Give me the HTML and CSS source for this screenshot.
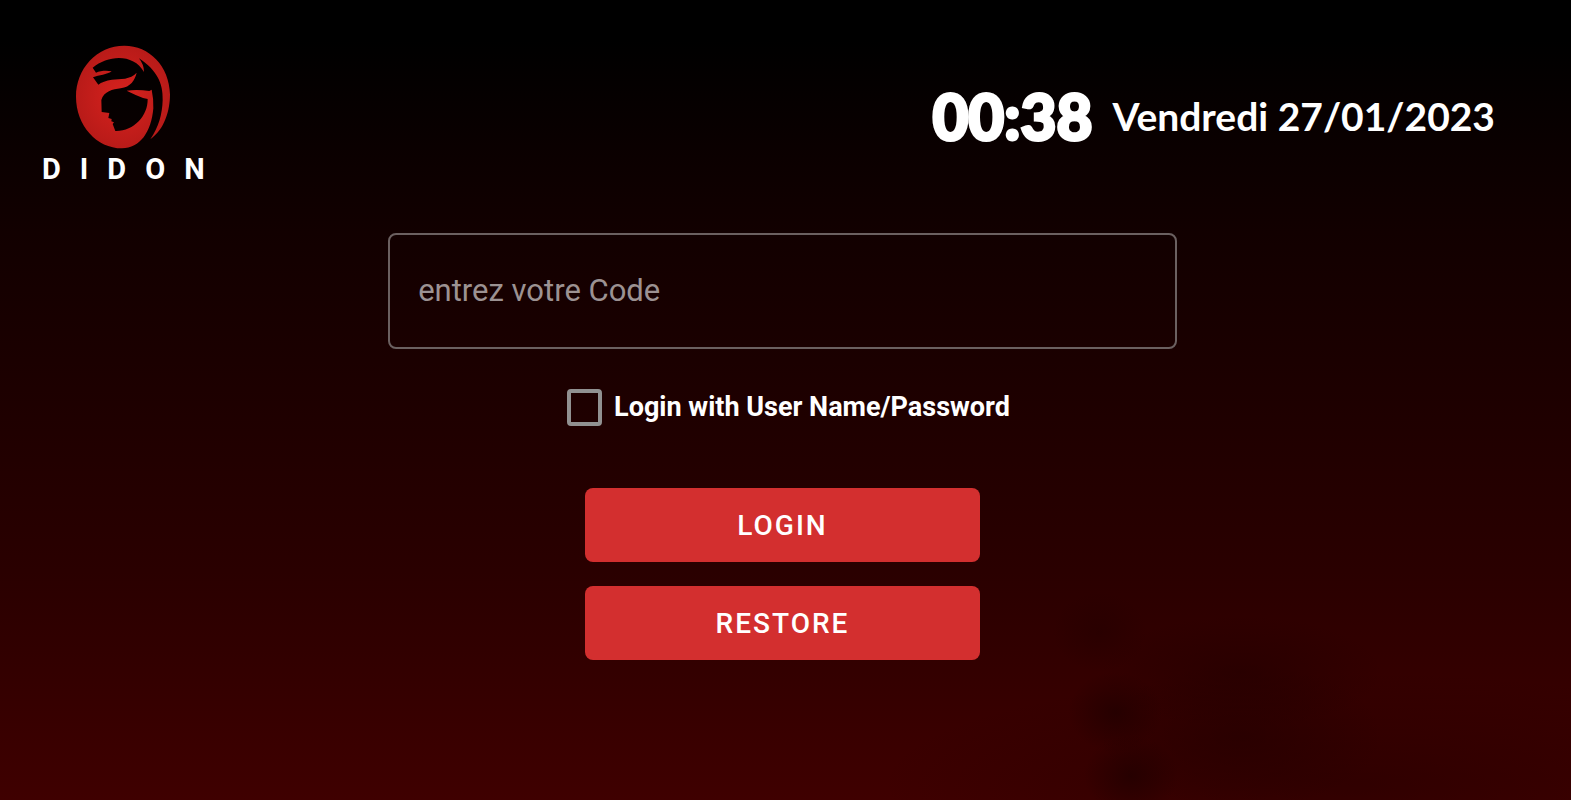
FILE: index.html
```html
<!DOCTYPE html>
<html lang="fr">
<head>
<meta charset="utf-8">
<meta name="viewport" content="width=device-width, initial-scale=1">
<title>Didon</title>
<link rel="stylesheet" href="styles.css">
</head>
<body>
<div class="screen">
  <header class="header">
    <div class="brand">
      <svg class="brand-mark" viewBox="18 15 286 312" aria-hidden="true">
        <defs>
          <radialGradient id="mark-fill" cx="0.5" cy="0.5" r="0.55">
            <stop offset="0" stop-color="#d8221e"/>
            <stop offset="1" stop-color="#b51a18"/>
          </radialGradient>
        </defs>
        <path fill="url(#mark-fill)" d="M243 298C286 268 302 212 302 163C300 78 240 17 165 17C82 17 20 86 20 170C20 256 82 325 158 325C212 325 246 276 252 205Q253 176 247 149L240 153Q205 148 172 152Q185 158 199 165Q218 174 235 177C236 228 192 275 138 273L130 252L134 247L126 244L127 237L117 234L120 219L97 216L96 180C104 154 130 148 154 145C184 140 196 122 202 98C184 119 152 117 128 119C110 121 96 127 87 134L71 112C90 104 112 105 127 94C112 91 94 92 80 98L70 83C118 43 194 41 224 96Q224 74 209 55C262 90 282 130 280 180C279 222 268 262 243 298Z"/>
      </svg>
      <div class="brand-name">DIDON</div>
    </div>
    <div class="clock">
      <time class="clock-time">00:38</time>
      <time class="clock-date" datetime="2023-01-27">Vendredi 27/01/2023</time>
    </div>
  </header>
  <main class="main">
    <form class="login">
      <input class="code" type="text" placeholder="entrez votre Code" aria-label="entrez votre Code">
      <label class="mode"><input class="mode-box" type="checkbox">Login with User Name/Password</label>
      <div class="actions">
        <button class="action" type="button">LOGIN</button>
        <button class="action" type="button">RESTORE</button>
      </div>
    </form>
  </main>
</div>
</body>
</html>
```

FILE: styles.css
```css
* {
  box-sizing: border-box;
}

body {
  margin: 0;
  background: #000;
  color: #fff;
  font-family: Roboto, "Liberation Sans", sans-serif;
}

.screen {
  min-height: 100vh;
  background:
    radial-gradient(ellipse 3% 5% at 70% 79%, rgba(28, 0, 0, 0.3), transparent),
    radial-gradient(ellipse 3% 5% at 71% 89%, rgba(28, 0, 0, 0.6), transparent),
    radial-gradient(ellipse 3% 5% at 72% 97%, rgba(28, 0, 0, 0.6), transparent),
    radial-gradient(ellipse 9% 7% at 79% 84%, rgba(28, 0, 0, 0.4), transparent),
    radial-gradient(ellipse 9% 9% at 79% 92%, rgba(28, 0, 0, 0.4), transparent),
    radial-gradient(ellipse 30% 14% at 86% 98%, rgba(28, 0, 0, 0.4), transparent),
    linear-gradient(#000 0, #000 5%, #120000 29%, #200000 54%, #2b0000 73%, #3f0000 100%);
}

.header {
  display: flex;
  justify-content: space-between;
  align-items: flex-start;
  padding: 45px 76px 0 42px;
}

.brand {
  display: flex;
  flex-direction: column;
  align-items: center;
}

.brand-mark {
  display: block;
  width: 96px;
  height: 104px;
}

.brand-name {
  margin-right: -20px;
  font-size: 29px;
  line-height: 40px;
  font-weight: 700;
  letter-spacing: 19px;
}

.clock {
  display: flex;
  align-items: center;
  gap: 20px;
  padding-top: 33px;
  font-family: Lato, "Open Sans", sans-serif;
}

.clock-time {
  font-size: 62px;
  line-height: 76px;
  font-weight: 900;
  -webkit-text-stroke: 3px #fff;
}

.clock-date {
  font-size: 39px;
  line-height: 76px;
  font-weight: 700;
}

.main {
  padding: 44px 6px 0 0;
}

.login {
  display: flex;
  flex-direction: column;
  align-items: center;
}

.code {
  width: 50.4%;
  padding: 36px 28px;
  border: 2px solid #6b6060;
  border-radius: 8px;
  background: transparent;
  color: #fff;
  font-family: inherit;
  font-size: 31px;
  line-height: 40px;
}

.code::placeholder {
  color: #9c9292;
  opacity: 1;
}

.mode {
  display: flex;
  align-items: center;
  gap: 12px;
  margin-top: 39px;
  padding-left: 12px;
  font-size: 27px;
  line-height: 38px;
  font-weight: 700;
}

.mode-box {
  appearance: none;
  width: 35px;
  height: 37px;
  margin: 0;
  border: 4px solid #919191;
  border-radius: 4px;
}

.mode-box:checked {
  background: #d32f2f;
}

.actions {
  display: flex;
  flex-direction: column;
  gap: 24px;
  width: 25.2%;
  margin-top: 62px;
}

.action {
  padding: 19px 16px 17px;
  border: 0;
  border-radius: 8px;
  background: #d32f2f;
  color: #fff;
  font-family: inherit;
  font-size: 28px;
  line-height: 38px;
  font-weight: 500;
  letter-spacing: 2px;
}
```
